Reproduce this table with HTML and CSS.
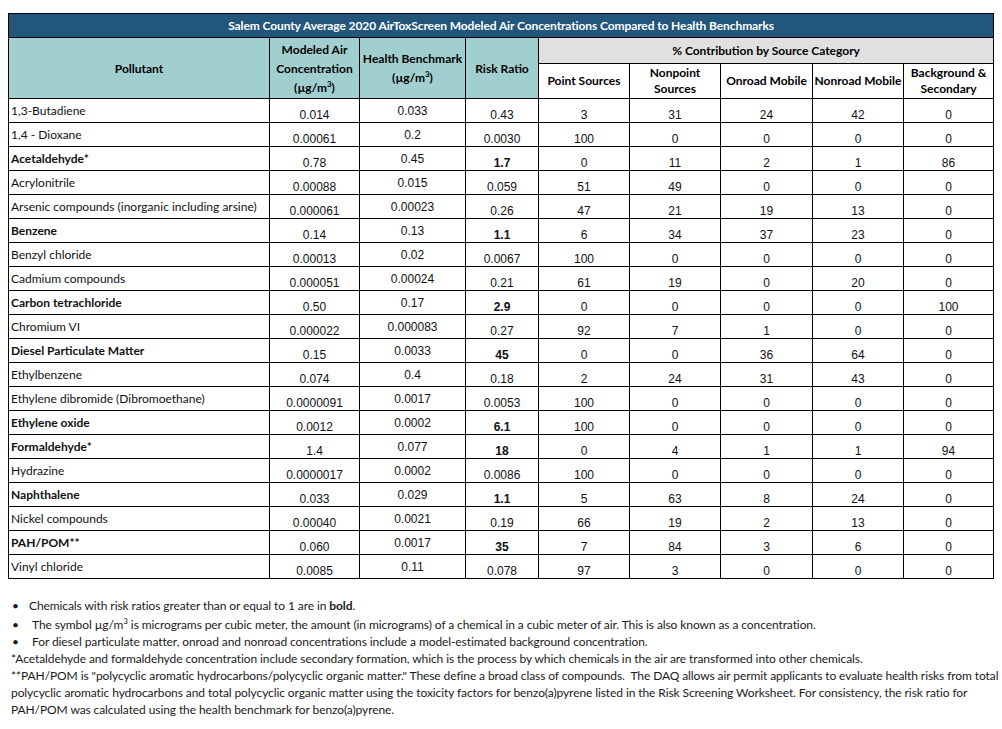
FILE: index.html
```html
<!DOCTYPE html>
<html lang="en">
<head>
<meta charset="utf-8">
<title>Salem County AirToxScreen</title>
<link rel="stylesheet" href="styles.css">
</head>
<body>
<table class="aq">
  <colgroup>
    <col class="c-pol"><col class="c-mod"><col class="c-hb"><col class="c-rr">
    <col class="c-s1"><col class="c-s2"><col class="c-s3"><col class="c-s4"><col class="c-s5">
  </colgroup>
  <thead>
    <tr class="title-row"><th colspan="9">Salem County Average 2020 AirToxScreen Modeled Air Concentrations Compared to Health Benchmarks</th></tr>
    <tr class="h1">
      <th rowspan="2" class="teal">Pollutant</th>
      <th rowspan="2" class="teal">Modeled Air<br>Concentration<br>(µg/m<sup>3</sup>)</th>
      <th rowspan="2" class="teal">Health Benchmark<br>(µg/m<sup>3</sup>)</th>
      <th rowspan="2" class="teal">Risk Ratio</th>
      <th colspan="5" class="grey">% Contribution by Source Category</th>
    </tr>
    <tr class="h2">
      <th>Point Sources</th>
      <th>Nonpoint<br>Sources</th>
      <th>Onroad Mobile</th>
      <th>Nonroad Mobile</th>
      <th>Background &amp;<br>Secondary</th>
    </tr>
  </thead>
  <tbody>
    <tr><td class="pol">1,3-Butadiene</td><td>0.014</td><td class="hb">0.033</td><td>0.43</td><td>3</td><td>31</td><td>24</td><td>42</td><td>0</td></tr>
    <tr><td class="pol">1,4 - Dioxane</td><td>0.00061</td><td class="hb">0.2</td><td>0.0030</td><td>100</td><td>0</td><td>0</td><td>0</td><td>0</td></tr>
    <tr class="hi"><td class="pol">Acetaldehyde*</td><td>0.78</td><td class="hb">0.45</td><td class="rr">1.7</td><td>0</td><td>11</td><td>2</td><td>1</td><td>86</td></tr>
    <tr><td class="pol">Acrylonitrile</td><td>0.00088</td><td class="hb">0.015</td><td>0.059</td><td>51</td><td>49</td><td>0</td><td>0</td><td>0</td></tr>
    <tr><td class="pol">Arsenic compounds (inorganic including arsine)</td><td>0.000061</td><td class="hb">0.00023</td><td>0.26</td><td>47</td><td>21</td><td>19</td><td>13</td><td>0</td></tr>
    <tr class="hi"><td class="pol">Benzene</td><td>0.14</td><td class="hb">0.13</td><td class="rr">1.1</td><td>6</td><td>34</td><td>37</td><td>23</td><td>0</td></tr>
    <tr><td class="pol">Benzyl chloride</td><td>0.00013</td><td class="hb">0.02</td><td>0.0067</td><td>100</td><td>0</td><td>0</td><td>0</td><td>0</td></tr>
    <tr><td class="pol">Cadmium compounds</td><td>0.000051</td><td class="hb">0.00024</td><td>0.21</td><td>61</td><td>19</td><td>0</td><td>20</td><td>0</td></tr>
    <tr class="hi"><td class="pol">Carbon tetrachloride</td><td>0.50</td><td class="hb">0.17</td><td class="rr">2.9</td><td>0</td><td>0</td><td>0</td><td>0</td><td>100</td></tr>
    <tr><td class="pol">Chromium VI</td><td>0.000022</td><td class="hb">0.000083</td><td>0.27</td><td>92</td><td>7</td><td>1</td><td>0</td><td>0</td></tr>
    <tr class="hi"><td class="pol">Diesel Particulate Matter</td><td>0.15</td><td class="hb">0.0033</td><td class="rr">45</td><td>0</td><td>0</td><td>36</td><td>64</td><td>0</td></tr>
    <tr><td class="pol">Ethylbenzene</td><td>0.074</td><td class="hb">0.4</td><td>0.18</td><td>2</td><td>24</td><td>31</td><td>43</td><td>0</td></tr>
    <tr><td class="pol">Ethylene dibromide (Dibromoethane)</td><td>0.0000091</td><td class="hb">0.0017</td><td>0.0053</td><td>100</td><td>0</td><td>0</td><td>0</td><td>0</td></tr>
    <tr class="hi"><td class="pol">Ethylene oxide</td><td>0.0012</td><td class="hb">0.0002</td><td class="rr">6.1</td><td>100</td><td>0</td><td>0</td><td>0</td><td>0</td></tr>
    <tr class="hi"><td class="pol">Formaldehyde*</td><td>1.4</td><td class="hb">0.077</td><td class="rr">18</td><td>0</td><td>4</td><td>1</td><td>1</td><td>94</td></tr>
    <tr><td class="pol">Hydrazine</td><td>0.0000017</td><td class="hb">0.0002</td><td>0.0086</td><td>100</td><td>0</td><td>0</td><td>0</td><td>0</td></tr>
    <tr class="hi"><td class="pol">Naphthalene</td><td>0.033</td><td class="hb">0.029</td><td class="rr">1.1</td><td>5</td><td>63</td><td>8</td><td>24</td><td>0</td></tr>
    <tr><td class="pol">Nickel compounds</td><td>0.00040</td><td class="hb">0.0021</td><td>0.19</td><td>66</td><td>19</td><td>2</td><td>13</td><td>0</td></tr>
    <tr class="hi"><td class="pol">PAH/POM**</td><td>0.060</td><td class="hb">0.0017</td><td class="rr">35</td><td>7</td><td>84</td><td>3</td><td>6</td><td>0</td></tr>
    <tr><td class="pol">Vinyl chloride</td><td>0.0085</td><td class="hb">0.11</td><td>0.078</td><td>97</td><td>3</td><td>0</td><td>0</td><td>0</td></tr>
  </tbody>
</table>

<div class="notes">
  <div class="bullet"><span class="dot">•</span><span class="btext">Chemicals with risk ratios greater than or equal to 1 are in <b>bold</b>.</span></div>
  <div class="bullet sup-line"><span class="dot">•</span><span class="btext shift">The symbol µg/m<sup>3</sup> is micrograms per cubic meter, the amount (in micrograms) of a chemical in a cubic meter of air. This is also known as a concentration.</span></div>
  <div class="bullet"><span class="dot">•</span><span class="btext shift">For diesel particulate matter, onroad and nonroad concentrations include a model-estimated background concentration.</span></div>
  <p class="note">*Acetaldehyde and formaldehyde concentration include secondary formation, which is the process by which chemicals in the air are transformed into other chemicals.</p>
  <p class="note">**PAH/POM is "polycyclic aromatic hydrocarbons/polycyclic organic matter." These define a broad class of compounds.&nbsp; The DAQ allows air permit applicants to evaluate health risks from total<br>polycyclic aromatic hydrocarbons and total polycyclic organic matter using the toxicity factors for benzo(a)pyrene listed in the Risk Screening Worksheet. For consistency, the risk ratio for<br>PAH/POM was calculated using the health benchmark for benzo(a)pyrene.</p>
</div>
</body>
</html>
```

FILE: styles.css
```css
html, body {
  background: #ffffff;
}

body {
  margin: 0;
  padding: 13px 0 0 8px;
  font-family: Lato, "Noto Sans", sans-serif;
  color: #000000;
}

.aq {
  border-collapse: collapse;
  table-layout: fixed;
  width: 986px;
}

.c-pol { width: 261px; }
.c-mod { width: 90px; }
.c-hb { width: 106px; }
.c-rr { width: 73px; }
.c-s1 { width: 91px; }
.c-s2 { width: 91px; }
.c-s3 { width: 92px; }
.c-s4 { width: 91px; }
.c-s5 { width: 90px; }

.aq th,
.aq td {
  border: 1px solid #000000;
  padding: 0;
}

.aq th {
  font-family: Lato, "Noto Sans", sans-serif;
  font-weight: 700;
  font-size: 12px;
  text-align: center;
  vertical-align: middle;
}

.title-row th {
  height: 23px;
  background: #23567b;
  color: #ffffff;
  font-size: 12px;
  letter-spacing: -0.1px;
}

.h1 th {
  line-height: 19px;
}

.teal {
  background: #a1cfcf;
}

.grey {
  background: #e0e0e0;
  height: 25px;
}

.h2 th {
  height: 34px;
  line-height: 16px;
  background: #ffffff;
}

.aq sup {
  font-size: 8px;
  line-height: 0;
  vertical-align: 5px;
}

.aq td {
  height: 23px;
  font-family: "Liberation Sans", Arial, sans-serif;
  font-size: 12px;
  line-height: 14px;
  text-align: center;
  vertical-align: bottom;
  color: #111111;
}

.aq td.pol {
  font-family: Lato, "Noto Sans", sans-serif;
  text-align: left;
  vertical-align: middle;
  padding-left: 2px;
  white-space: nowrap;
}

.aq td.hb {
  vertical-align: middle;
}

.hi td.pol,
.hi td.rr {
  font-weight: 700;
}

.notes {
  margin-top: 18px;
  font-family: Lato, "Noto Sans", sans-serif;
  font-size: 12px;
  line-height: 17px;
  letter-spacing: -0.09px;
  color: #1a1a1a;
}

.bullet {
  display: flex;
  white-space: nowrap;
}

.dot {
  width: 21px;
  padding-left: 4px;
  box-sizing: border-box;
}

.btext.shift {
  margin-left: 3px;
}

.sup-line {
  margin-top: 2px;
}

.notes sup {
  font-size: 8px;
  line-height: 0;
  vertical-align: 5px;
}

.note {
  margin: 0;
  padding-left: 3px;
  white-space: nowrap;
}
```
